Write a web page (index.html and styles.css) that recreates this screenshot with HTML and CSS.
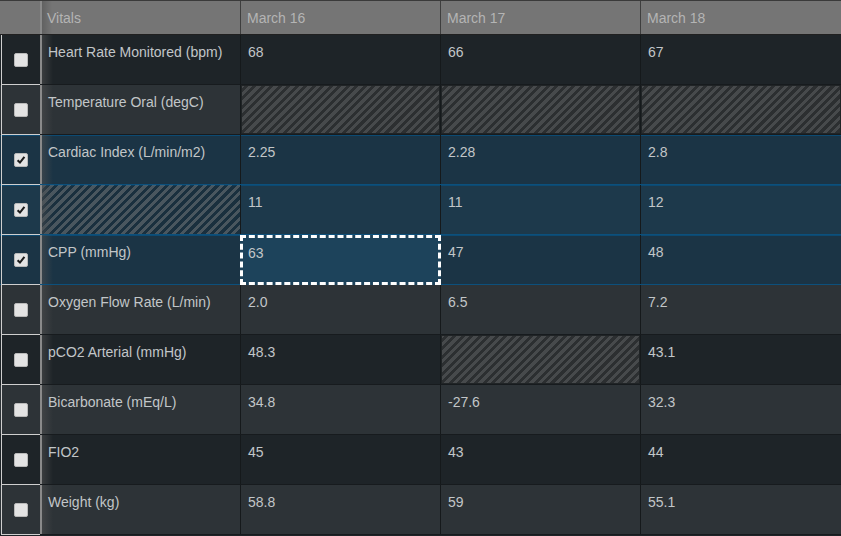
FILE: index.html
```html
<!DOCTYPE html>
<html>
<head>
<meta charset="utf-8">
<link rel="stylesheet" href="styles.css">
</head>
<body>
<div class="grid">
  <div class="row head">
    <div class="chk"></div>
    <div class="cell first">Vitals</div>
    <div class="cell">March 16</div>
    <div class="cell">March 17</div>
    <div class="cell">March 18</div>
  </div>

  <div class="row odd">
    <div class="chk"><span class="box"></span></div>
    <div class="cell first">Heart Rate Monitored (bpm)</div>
    <div class="cell">68</div>
    <div class="cell">66</div>
    <div class="cell">67</div>
  </div>

  <div class="row even">
    <div class="chk"><span class="box"></span></div>
    <div class="cell first">Temperature Oral (degC)</div>
    <div class="cell hatch"></div>
    <div class="cell hatch"></div>
    <div class="cell hatch"></div>
  </div>

  <div class="row sel sel-odd">
    <div class="chk"><span class="box on"><svg viewBox="0 0 14 14"><path d="M3 7.2 L5.8 10 L11 3.4" fill="none" stroke="#1c1c1c" stroke-width="2.4"/></svg></span></div>
    <div class="cell first">Cardiac Index (L/min/m2)</div>
    <div class="cell">2.25</div>
    <div class="cell">2.28</div>
    <div class="cell">2.8</div>
  </div>

  <div class="row sel sel-even">
    <div class="chk"><span class="box on"><svg viewBox="0 0 14 14"><path d="M3 7.2 L5.8 10 L11 3.4" fill="none" stroke="#1c1c1c" stroke-width="2.4"/></svg></span></div>
    <div class="cell first hatch"></div>
    <div class="cell">11</div>
    <div class="cell">11</div>
    <div class="cell">12</div>
  </div>

  <div class="row sel sel-odd">
    <div class="chk"><span class="box on"><svg viewBox="0 0 14 14"><path d="M3 7.2 L5.8 10 L11 3.4" fill="none" stroke="#1c1c1c" stroke-width="2.4"/></svg></span></div>
    <div class="cell first">CPP (mmHg)</div>
    <div class="cell focus">63</div>
    <div class="cell">47</div>
    <div class="cell">48</div>
  </div>

  <div class="row even">
    <div class="chk"><span class="box"></span></div>
    <div class="cell first">Oxygen Flow Rate (L/min)</div>
    <div class="cell">2.0</div>
    <div class="cell">6.5</div>
    <div class="cell">7.2</div>
  </div>

  <div class="row odd">
    <div class="chk"><span class="box"></span></div>
    <div class="cell first">pCO2 Arterial (mmHg)</div>
    <div class="cell">48.3</div>
    <div class="cell hatch"></div>
    <div class="cell">43.1</div>
  </div>

  <div class="row even">
    <div class="chk"><span class="box"></span></div>
    <div class="cell first">Bicarbonate (mEq/L)</div>
    <div class="cell">34.8</div>
    <div class="cell">-27.6</div>
    <div class="cell">32.3</div>
  </div>

  <div class="row odd">
    <div class="chk"><span class="box"></span></div>
    <div class="cell first">FIO2</div>
    <div class="cell">45</div>
    <div class="cell">43</div>
    <div class="cell">44</div>
  </div>

  <div class="row even">
    <div class="chk"><span class="box"></span></div>
    <div class="cell first">Weight (kg)</div>
    <div class="cell">58.8</div>
    <div class="cell">59</div>
    <div class="cell">55.1</div>
  </div>
</div>
</body>
</html>
```

FILE: styles.css
```css
html, body {
  margin: 0;
  padding: 0;
  background: #1e2428;
  width: 841px;
  height: 536px;
  overflow: hidden;
  font-family: "Liberation Sans", Arial, sans-serif;
  font-size: 14px;
  color: #c2c6c8;
}

.grid {
  display: flex;
  flex-direction: column;
}

.row {
  display: grid;
  grid-template-columns: 40px 201px 200px 200px 200px;
  height: 50px;
  box-sizing: border-box;
  border-bottom: 1px solid #171b1e;
}

.row.head {
  height: 35px;
  background: #757575;
  color: #b4b4b4;
  border-top: 1px solid #3a3a3a;
  border-bottom: 1px solid #202020;
}

.odd { background: #1e2428; }
.even { background: #2d3337; }
.sel-odd { background: #1b3445; }
.sel-even { background: #1d394b; }

.row.sel {
  border-bottom: 1px solid #0c507c;
  box-shadow: inset 0 1px 0 #0c4a72;
}

.cell {
  box-sizing: border-box;
  border-right: 1px solid #15191b;
  padding: 9px 7px 7px;
  line-height: 17px;
  white-space: nowrap;
  position: relative;
}

.head .cell {
  padding: 9px 6px 7px;
  border-right: 1px solid #3e3e3e;
}

.cell.first {
  border-left: 2px solid #8a8a8a;
  padding-left: 6px;
  background-image: linear-gradient(to right, rgba(80, 80, 80, 0.55), rgba(80, 80, 80, 0) 11px);
}

.head .cell.first {
  padding-left: 5px;
  background-image: linear-gradient(to right, rgba(60, 60, 60, 0.35), rgba(60, 60, 60, 0) 10px);
}

.cell:last-child {
  border-right: none;
}

.chk {
  margin-left: 1px;
  border-left: 1px solid #cfcfcf;
  display: flex;
  align-items: center;
  justify-content: center;
  box-sizing: border-box;
  padding-right: 1px;
}

.row:not(.head) .chk {
  box-shadow: 0 1px 0 #cfcfcf;
  position: relative;
  z-index: 1;
}

.head .chk {
  border-left: none;
  margin-left: 0;
}

.box {
  width: 14px;
  height: 14px;
  box-sizing: border-box;
  background: #e3e3e3;
  border: 1px solid #b9b9b9;
  border-radius: 2px;
  display: block;
  margin-top: 1px;
}

.box svg {
  display: block;
  width: 12px;
  height: 12px;
}

.hatch {
  background-image: repeating-linear-gradient(135deg, #474a4c 0 3px, #2c2f31 3px 6px);
  box-shadow: inset 0 0 0 1px #202426;
}

.sel .hatch {
  background-image: repeating-linear-gradient(135deg, rgba(110, 110, 110, 0.55) 0 3px, rgba(20, 30, 38, 0.35) 3px 6px);
  box-shadow: none;
}

.cell.first.hatch {
  background-image: linear-gradient(to right, rgba(80, 80, 80, 0.5), rgba(80, 80, 80, 0) 11px), repeating-linear-gradient(135deg, rgba(110, 110, 110, 0.55) 0 3px, rgba(20, 30, 38, 0.35) 3px 6px);
}

.focus {
  background: #1d435b;
  border: 3px dashed #ffffff;
  padding: 7px 5px 5px;
  margin: 0 0 -1px -1px;
  z-index: 2;
}
```
